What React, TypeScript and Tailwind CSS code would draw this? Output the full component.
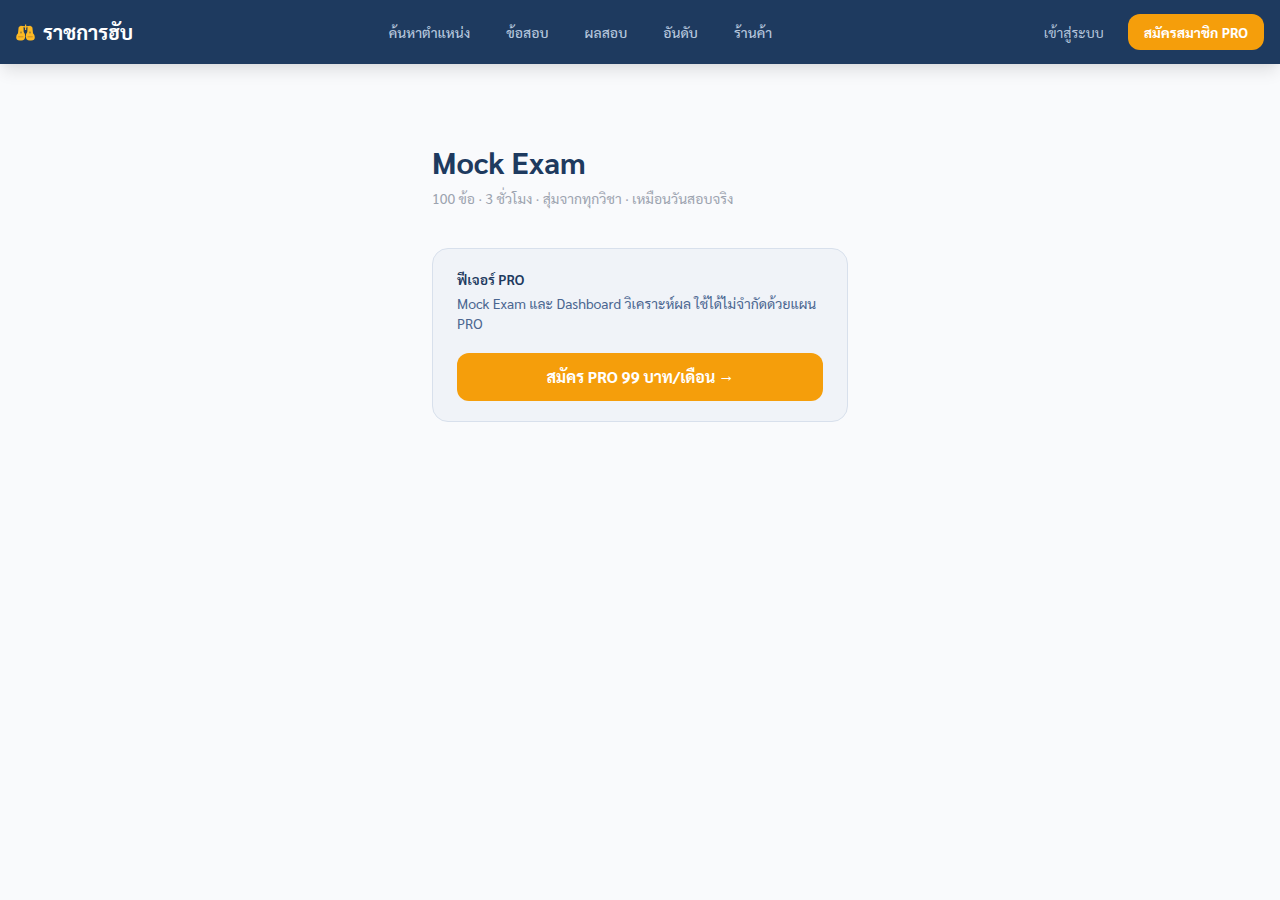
import { clsx } from "clsx";

const FONT = "font-['Sarabun','Noto_Sans_Thai','Open_Sans',sans-serif]";

const navLinks = [
  { label: "ค้นหาตำแหน่ง", href: "#positions" },
  { label: "ข้อสอบ", href: "#exams" },
  { label: "ผลสอบ", href: "#results" },
  { label: "อันดับ", href: "#ranking" },
  { label: "ร้านค้า", href: "#shop" },
];

function ScalesIcon() {
  return (
    <svg viewBox="0 0 19 18" className="h-[18px] w-[19px] shrink-0 text-[#fdb924]" fill="currentColor" aria-hidden="true">
      <path d="M9 1.500h1.200v1.800l4.300-.5v1.200l-4.300.5V7H9V4.500L4.500 4V2.800l4.500.5z" />
      <path d="M2.600 4.600Q3 3 5 3T7.500 4.600L7.700 9Q9.300 10.500 9.200 13.500 9 17.500 5.400 17.500H3.800Q.2 17.500.2 14.200.2 11.800 2 10.300z" />
      <path d="M16.400 4.600Q16 3 14 3T11.500 4.600L11.300 9Q9.700 10.500 9.800 13.500 10 17.500 13.600 17.500h1.600q3.600 0 3.600-3.300 0-2.400-1.800-3.900z" />
      <path d="M4 10.300l1-2.500 1 2.500zM13 10.300l1-2.500 1 2.500z" fill="#1e3a5f" fillOpacity=".5" />
      <path d="M2.200 13.800h5.200M11.600 13.800h5.200" stroke="#b98226" strokeWidth=".8" />
    </svg>
  );
}

function Navbar() {
  return (
    <header className="bg-[#1e3a5f] shadow-[0_10px_15px_-3px_rgba(0,0,0,0.1),0_4px_6px_-2px_rgba(0,0,0,0.03)]">
      <div className="flex h-16 items-center justify-between px-4">
        <a href="#home" className="flex items-center gap-2 text-xl font-bold text-white">
          <ScalesIcon />
          ราชการฮับ
        </a>
        <nav className="flex items-center gap-1">
          {navLinks.map((link) => (
            <a key={link.href} href={link.href} className="px-4 py-2 text-sm font-medium text-[#b4c5dc]">
              {link.label}
            </a>
          ))}
        </nav>
        <div className="flex items-center gap-2">
          <a href="#login" className="px-4 py-2 text-sm text-[#b4c5dc]">
            เข้าสู่ระบบ
          </a>
          <a href="#register" className="rounded-xl bg-[#f59e0b] px-4 py-2 text-sm font-bold text-white">
            สมัครสมาชิก PRO
          </a>
        </div>
      </div>
    </header>
  );
}

function ProCard() {
  return (
    <section className="rounded-2xl border border-[#d8e0ec] bg-[#f0f3f8] px-6 py-5">
      <h2 className="mb-1 text-sm font-semibold text-[#1e3a5f]">ฟีเจอร์ PRO</h2>
      <p className="mb-5 text-sm text-[#4a6690]">
        Mock Exam และ Dashboard วิเคราะห์ผล ใช้ได้ไม่จำกัดด้วยแผน PRO
      </p>
      <button type="button" className="block w-full rounded-xl bg-[#f59e0b] py-3 text-base font-bold text-white">
        สมัคร PRO 99 บาท/เดือน →
      </button>
    </section>
  );
}

export default function App() {
  return (
    <div className={clsx("min-h-screen bg-[#f9fafc]", FONT)}>
      <Navbar />
      <main className="mx-auto max-w-md px-4 py-20">
        <h1 className="mb-2 text-3xl font-bold text-[#1e3a5f]">Mock Exam</h1>
        <p className="mb-10 text-sm text-[#9ca3af]">100 ข้อ · 3 ชั่วโมง · สุ่มจากทุกวิชา · เหมือนวันสอบจริง</p>
        <ProCard />
      </main>
    </div>
  );
}
